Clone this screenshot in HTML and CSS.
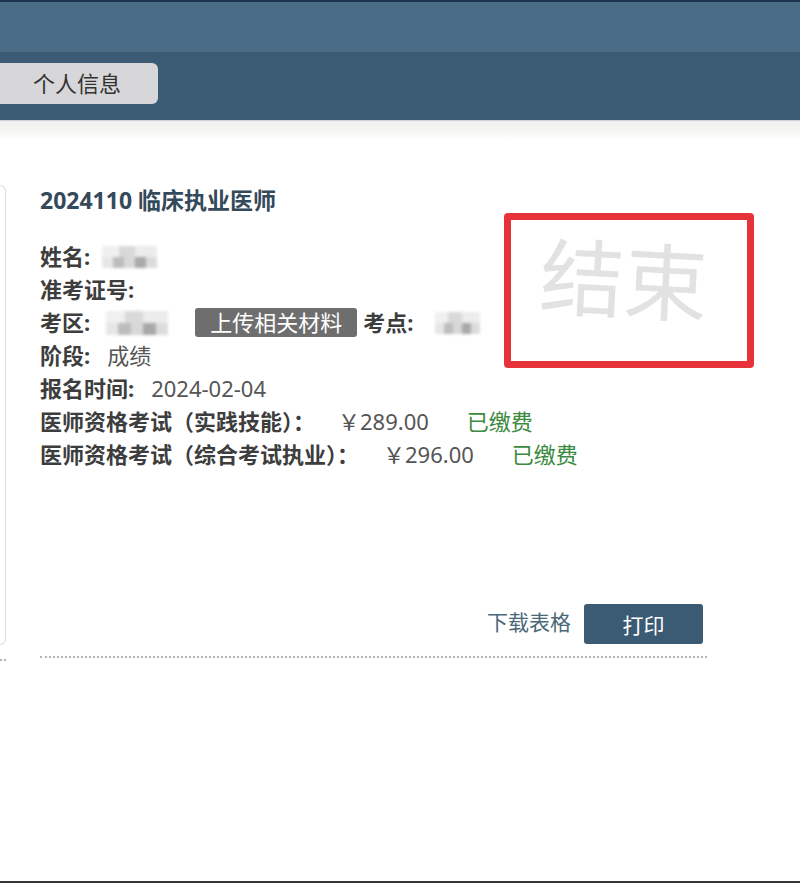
FILE: index.html
```html
<!DOCTYPE html>
<html lang="zh-CN">
<head>
<meta charset="utf-8">
<title>个人信息</title>
<link rel="stylesheet" href="styles.css">
</head>
<body>
<div class="topline"></div>
<header class="header"></header>
<nav class="nav">
  <div class="tab">个人信息</div>
</nav>
<div class="navline"></div>
<div class="strip"></div>
<main class="main">
  <div class="stub-col">
    <div class="stub"></div>
    <div class="stub-dots"></div>
  </div>
  <section class="content">
    <div class="record">
      <h1 class="title">2024110 临床执业医师</h1>
      <div class="rows">
        <div class="row"><span class="label">姓名:</span><span class="blur blur-name"></span></div>
        <div class="row"><span class="label">准考证号:</span></div>
        <div class="row">
          <span class="label">考区:</span><span class="blur blur-area"></span>
          <span class="upload">上传相关材料</span>
          <span class="label label-site">考点:</span><span class="blur blur-site"></span>
        </div>
        <div class="row"><span class="label">阶段:</span><span class="value">成绩</span></div>
        <div class="row"><span class="label">报名时间:</span><span class="value">2024-02-04</span></div>
        <div class="row"><span class="label">医师资格考试（实践技能）：</span><span class="money money-1">￥289.00</span><span class="paid">已缴费</span></div>
        <div class="row"><span class="label">医师资格考试（综合考试执业）：</span><span class="money money-2">￥296.00</span><span class="paid">已缴费</span></div>
      </div>
      <div class="stamp"><span>结束</span></div>
      <div class="actions">
        <a class="download">下载表格</a>
        <button class="print">打印</button>
      </div>
    </div>
    <div class="dots"></div>
  </section>
</main>
<div class="bottomline"></div>
</body>
</html>
```
FILE: styles.css
```css
* { box-sizing: border-box; }
html, body { margin: 0; padding: 0; }
body {
  width: 800px;
  height: 883px;
  overflow: hidden;
  background: #ffffff;
  font-family: "Noto Sans", "Noto Sans CJK SC", sans-serif;
  color: #444;
  display: flex;
  flex-direction: column;
}
.topline { height: 2px; background: #1e3550; }
.header { height: 50px; background: #4a6c87; }
.nav {
  height: 68px;
  background: #3b5a73;
  padding-top: 11px;
}
.tab {
  width: 158px;
  height: 41px;
  background: #d7d7d9;
  border-radius: 0 6px 6px 0;
  color: #333;
  font-size: 22px;
  line-height: 41px;
  text-align: center;
  padding-right: 4px;
}
.navline { height: 1px; background: #cdd2d8; }
.strip { height: 18px; background: linear-gradient(#f1f1ef, #f6f6f4 60%, #ffffff); }

.main { flex: 1; display: flex; }
.stub-col { width: 6px; padding-top: 46px; }
.stub {
  height: 460px;
  border: 1.5px solid #dedede;
  border-left: none;
  border-radius: 0 8px 8px 0;
}
.stub-dots { margin-top: 14px; border-top: 2px dotted #b5b5b5; }

.content { margin-left: 34px; width: 667px; }
.record { position: relative; padding-top: 46px; }
.title {
  margin: 0;
  font-size: 23px;
  line-height: 30px;
  font-weight: 700;
  color: #34495a;
}
.rows { margin-top: 25px; }
.row {
  height: 33px;
  line-height: 33px;
  font-size: 22px;
  display: flex;
  align-items: center;
  white-space: nowrap;
}
.label { font-weight: 700; color: #3d3d3d; }
.value { color: #555; margin-left: 17px; }
.money { color: #555; }
.money-1 { margin-left: 23px; }
.money-2 { margin-left: 24px; }
.paid { color: #3a8a40; margin-left: 38px; }
.label-site { margin-left: 6px; }

.blur {
  display: inline-block;
  height: 22px;
  filter: blur(1.5px);
  background:
    linear-gradient(90deg, #e6e6e6 0 20%, #bdbdbd 20% 40%, #d8d8d8 40% 60%, #a9a9a9 60% 80%, #dcdcdc 80% 100%) bottom / 100% 50% no-repeat,
    linear-gradient(90deg, #f0f0f0 0 30%, #d9d9d9 30% 60%, #ececec 60% 100%) top / 100% 50% no-repeat;
}
.blur-name { width: 55px; margin-left: 12px; }
.blur-area { width: 62px; margin-left: 16px; height: 24px; }
.blur-site { width: 45px; margin-left: 22px; }

.upload {
  margin-left: 27px;
  height: 29px;
  line-height: 29px;
  padding: 0 15px;
  background: #6e6e6e;
  color: #fff;
  font-size: 22px;
  border-radius: 3px;
}

.stamp {
  position: absolute;
  left: 464px;
  top: 74px;
  width: 250px;
  height: 155px;
  border: 7px solid #e8323a;
  border-radius: 4px;
  display: flex;
  align-items: flex-start;
  justify-content: center;
  padding-top: 10px;
}
.stamp span {
  font-size: 84px;
  line-height: 100px;
  color: #e2e2e2;
  margin-right: 10px;
  transform: rotate(3deg);
}

.actions {
  margin-top: 133px;
  display: flex;
  justify-content: flex-end;
  align-items: center;
  gap: 13px;
  padding-right: 4px;
}
.download {
  color: #4b6878;
  font-size: 21px;
  margin-top: -6px;
}
.print {
  width: 119px;
  height: 40px;
  border: none;
  border-radius: 3px;
  background: #3b5a73;
  color: #fff;
  font-family: "Noto Sans", "Noto Sans CJK SC", sans-serif;
  font-size: 21px;
  padding: 0;
}
.dots {
  margin-top: 12px;
  border-top: 2px dotted #b5b5b5;
}
.bottomline { height: 2px; background: #333; }
```
